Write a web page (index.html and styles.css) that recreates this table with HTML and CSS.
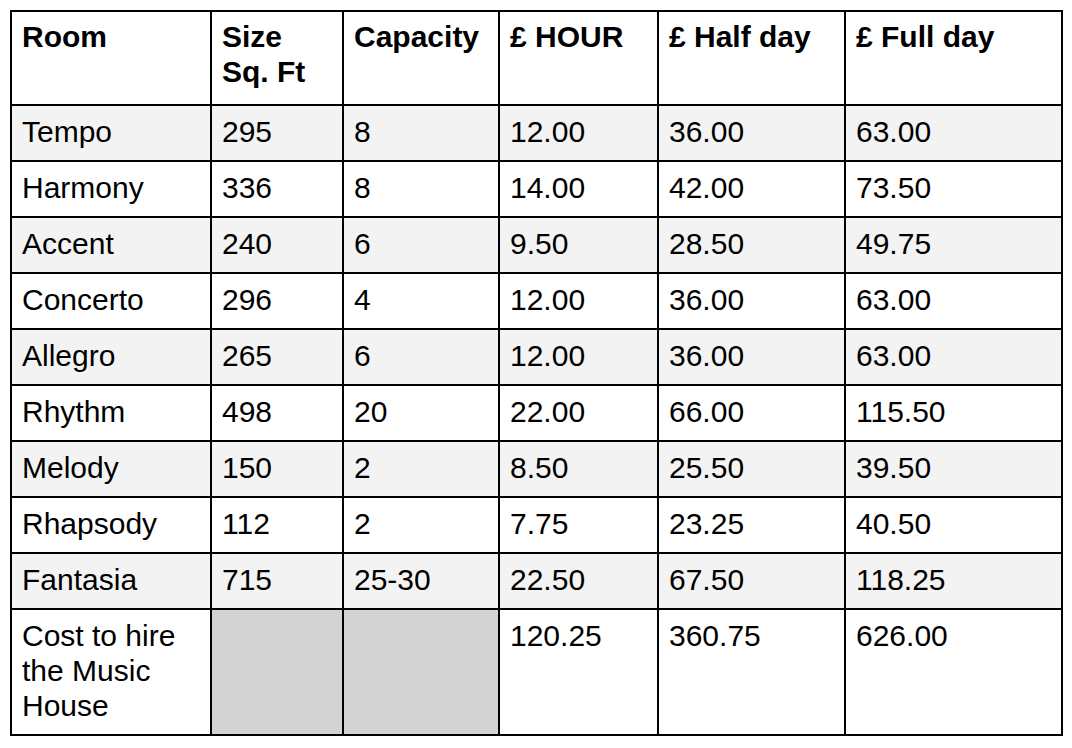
FILE: index.html
```html
<!DOCTYPE html>
<html>
<head>
<meta charset="utf-8">
<link rel="stylesheet" href="styles.css">
</head>
<body>
<table class="rates">
  <colgroup>
    <col class="c-room"><col class="c-size"><col class="c-cap"><col class="c-hour"><col class="c-half"><col class="c-full">
  </colgroup>
  <thead>
    <tr><th>Room</th><th>Size<br>Sq. Ft</th><th>Capacity</th><th>£ HOUR</th><th>£ Half day</th><th>£ Full day</th></tr>
  </thead>
  <tbody>
    <tr class="alt"><td>Tempo</td><td>295</td><td>8</td><td>12.00</td><td>36.00</td><td>63.00</td></tr>
    <tr><td>Harmony</td><td>336</td><td>8</td><td>14.00</td><td>42.00</td><td>73.50</td></tr>
    <tr class="alt"><td>Accent</td><td>240</td><td>6</td><td>9.50</td><td>28.50</td><td>49.75</td></tr>
    <tr><td>Concerto</td><td>296</td><td>4</td><td>12.00</td><td>36.00</td><td>63.00</td></tr>
    <tr class="alt"><td>Allegro</td><td>265</td><td>6</td><td>12.00</td><td>36.00</td><td>63.00</td></tr>
    <tr><td>Rhythm</td><td>498</td><td>20</td><td>22.00</td><td>66.00</td><td>115.50</td></tr>
    <tr class="alt"><td>Melody</td><td>150</td><td>2</td><td>8.50</td><td>25.50</td><td>39.50</td></tr>
    <tr><td>Rhapsody</td><td>112</td><td>2</td><td>7.75</td><td>23.25</td><td>40.50</td></tr>
    <tr class="alt"><td>Fantasia</td><td>715</td><td>25-30</td><td>22.50</td><td>67.50</td><td>118.25</td></tr>
    <tr class="total"><td>Cost to hire the Music House</td><td class="blank"></td><td class="blank"></td><td>120.25</td><td>360.75</td><td>626.00</td></tr>
  </tbody>
</table>
</body>
</html>
```
FILE: styles.css
```css
html, body {
  margin: 0;
  padding: 0;
  background: #ffffff;
}
body {
  padding: 10px;
  font-family: "Liberation Sans", Arial, sans-serif;
  color: #000;
}
.rates {
  border-collapse: collapse;
  table-layout: fixed;
  width: 1051px;
  font-size: 30px;
  line-height: 35px;
}
.c-room { width: 200px; }
.c-size { width: 132px; }
.c-cap { width: 156px; }
.c-hour { width: 159px; }
.c-half { width: 187px; }
.c-full { width: 217px; }
.rates th,
.rates td {
  border: 2px solid #000;
  padding: 8px 10px 11px 10px;
  text-align: left;
  vertical-align: top;
}
.rates th {
  font-weight: bold;
  padding-top: 7px;
  padding-bottom: 15px;
}
.rates tr.alt td {
  background: #f3f3f3;
}
.rates td.blank {
  background: #d3d3d3;
}
.rates tr.total td {
  padding-top: 8px;
  padding-bottom: 11px;
}
```
